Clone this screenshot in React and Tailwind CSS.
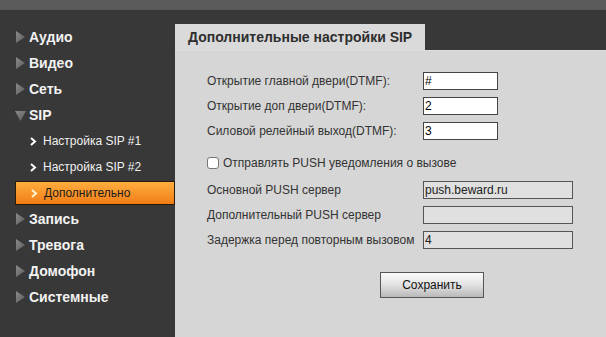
import React, { useState } from 'react';

const menu = [
  { label: 'Аудио' },
  { label: 'Видео' },
  { label: 'Сеть' },
  { label: 'SIP', open: true, children: ['Настройка SIP #1', 'Настройка SIP #2', 'Дополнительно'] },
  { label: 'Запись' },
  { label: 'Тревога' },
  { label: 'Домофон' },
  { label: 'Системные' },
];

const Arrow = ({ open }) => (
  <svg width="11" height="12" viewBox="0 0 11 12" className="shrink-0">
    <defs>
      <linearGradient id="tri" x1="0" y1="0" x2="1" y2="1">
        <stop offset="0" stopColor="#8a8a8a" />
        <stop offset="1" stopColor="#5c5c5c" />
      </linearGradient>
    </defs>
    {open ? <polygon points="0,2 11,2 5.5,12" fill="url(#tri)" /> : <polygon points="1,0 10,6 1,12" fill="url(#tri)" />}
  </svg>
);

const Chevron = ({ color }) => (
  <svg width="7" height="9" viewBox="0 0 7 9" className="shrink-0">
    <polyline points="1,1 5,4.5 1,8" fill="none" stroke={color} strokeWidth="2" />
  </svg>
);

const App = () => {
  const [active, setActive] = useState('Дополнительно');
  const [push, setPush] = useState(false);

  return (
    <div className="w-[606px] h-[337px] bg-[#383838] flex flex-col overflow-hidden" style={{ fontFamily: '"Liberation Sans", Arial, sans-serif' }}>
      {/* top strip */}
      <div className="h-[10px] bg-[#5a5a5a] shrink-0" />

      <div className="flex flex-1">
        {/* Sidebar */}
        <div className="w-[175px] shrink-0 pt-[14px]">
          {menu.map((item) => (
            <div key={item.label}>
              <div className="h-[26px] flex items-center gap-[3px] pl-[15px] text-[14px] font-bold text-[#f2f2f2]">
                <Arrow open={item.open} />
                <span>{item.label}</span>
              </div>
              {item.children && item.children.map((c) => {
                const isActive = active === c;
                return (
                  <div
                    key={c}
                    onClick={() => setActive(c)}
                    className={`h-[26px] flex items-center cursor-pointer ${isActive ? '' : 'pl-[30px] gap-[6px]'}`}
                  >
                    {isActive ? (
                      <div className="ml-[15px] w-full h-[24px] flex items-center gap-[6px] pl-[15px] border border-[#2a1a08] bg-gradient-to-b from-[#ffae3d] to-[#f07c12] text-[12px] text-[#1a1a1a]">
                        <Chevron color="#fff3d0" />
                        <span>{c}</span>
                      </div>
                    ) : (
                      <>
                        <Chevron color="#ffffff" />
                        <span className="text-[12px] text-[#f0f0f0]">{c}</span>
                      </>
                    )}
                  </div>
                );
              })}
            </div>
          ))}
        </div>

        {/* Content */}
        <div className="flex-1 flex flex-col pt-[14px]">
          <div className="flex h-[26px]">
            <div className="w-[250px] bg-[#dadada] flex items-center pl-[13px] text-[14px] font-bold text-[#2e2e2e]">
              Дополнительные настройки SIP
            </div>
          </div>
          <div className="flex-1 bg-[#d6d6d6] border-t border-[#dcdcdc] pl-[32px] pt-[21px] text-[12px] text-[#333]">
            <div className="flex flex-col gap-[7px]">
              {[
                ['Открытие главной двери(DTMF):', '#'],
                ['Открытие доп двери(DTMF):', '2'],
                ['Силовой релейный выход(DTMF):', '3'],
              ].map(([l, v]) => (
                <div key={l} className="flex items-center h-[18px]">
                  <span className="w-[216px]">{l}</span>
                  <input
                    defaultValue={v}
                    className="w-[75px] h-[18px] bg-white border border-[#444] px-[1px] text-[12px] text-black outline-none"
                  />
                </div>
              ))}
            </div>

            <label className="flex items-center gap-[4px] mt-[15px] h-[16px]">
              <input
                type="checkbox"
                checked={push}
                onChange={(e) => setPush(e.target.checked)}
                className="w-[12px] h-[12px] m-0 appearance-none bg-white border border-[#777] rounded-[3px] checked:bg-[#3b82f6]"
              />
              <span>Отправлять PUSH уведомления о вызове</span>
            </label>

            <div className="flex flex-col gap-[7px] mt-[10px]">
              {[
                ['Основной PUSH сервер', 'push.beward.ru'],
                ['Дополнительный PUSH сервер', ''],
                ['Задержка перед повторным вызовом', '4'],
              ].map(([l, v]) => (
                <div key={l} className="flex items-center h-[18px]">
                  <span className="w-[216px]">{l}</span>
                  <input
                    defaultValue={v}
                    disabled={!push}
                    className="w-[150px] h-[18px] bg-[#e0e0e0] border border-[#555] px-[1px] text-[12px] text-[#222] outline-none"
                  />
                </div>
              ))}
            </div>

            <div className="pl-[173px] mt-[23px]">
              <button className="w-[104px] h-[26px] border border-[#555] bg-gradient-to-b from-[#fbfbfb] via-[#e2e2e2] to-[#b9b9b9] text-[12px] text-[#111]">
                Сохранить
              </button>
            </div>
          </div>
        </div>
      </div>
    </div>
  );
};

export default App;
